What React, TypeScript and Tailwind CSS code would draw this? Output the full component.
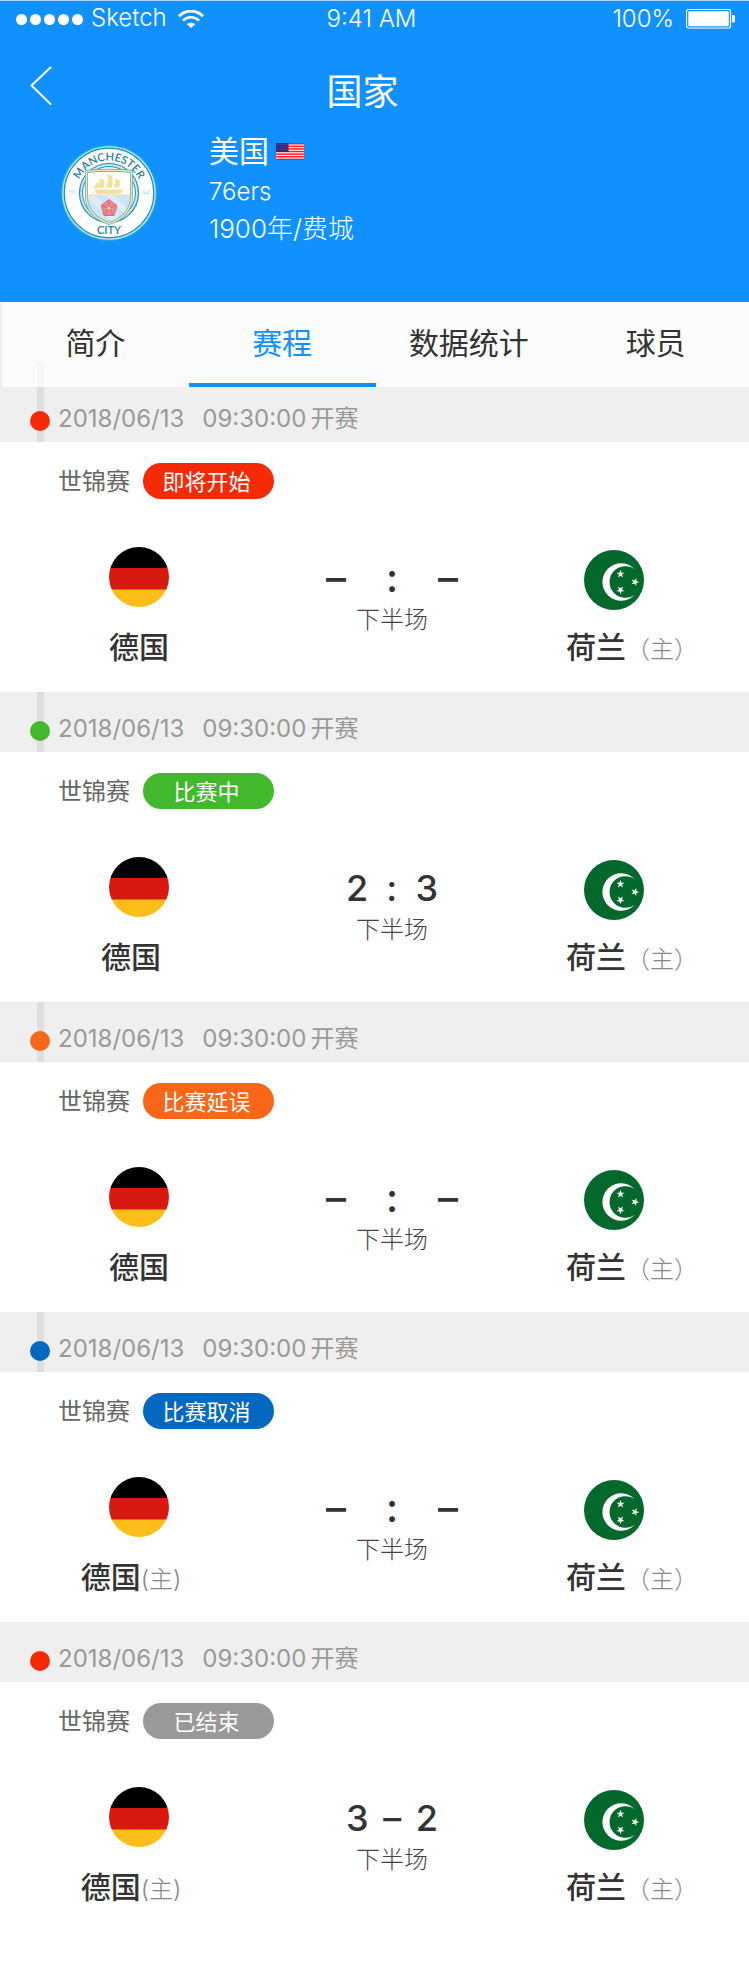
type Match = {
  id: number;
  status: string;
  pill: string;
  dot: string;
  score: [string, string, string];
  open: boolean;
  home: string;
  homeTag?: string;
  homePad: string;
};

const MATCHES: Match[] = [
  { id: 1, status: "即将开始", pill: "bg-[#f72a08]", dot: "bg-[#f72a08]", score: ["–", ":", "–"], open: true, home: "德国", homePad: "" },
  { id: 2, status: "比赛中", pill: "bg-[#42b92d]", dot: "bg-[#42b92d]", score: ["2", ":", "3"], open: false, home: "德国", homePad: "pr-4" },
  { id: 3, status: "比赛延误", pill: "bg-[#f86617]", dot: "bg-[#f86617]", score: ["–", ":", "–"], open: true, home: "德国", homePad: "" },
  { id: 4, status: "比赛取消", pill: "bg-[#0368bf]", dot: "bg-[#0368bf]", score: ["–", ":", "–"], open: true, home: "德国", homeTag: "(主)", homePad: "pr-4" },
  { id: 5, status: "已结束", pill: "bg-[#999999]", dot: "bg-[#f72a08]", score: ["3", "–", "2"], open: false, home: "德国", homeTag: "(主)", homePad: "pr-4" },
];

const TABS = ["简介", "赛程", "数据统计", "球员"];

function StatusBar() {
  return (
    <div className="grid h-9 grid-cols-3 items-center border-t border-[#a9d5fb] pr-[14px] pl-4 text-2xl leading-9 font-light">
      <div className="flex items-center">
        <div className="flex gap-[3px]">
          {[0, 1, 2, 3, 4].map((n) => (
            <span key={n} className="size-[11px] rounded-full bg-white" />
          ))}
        </div>
        <span className="ml-2 -mt-[2px]">Sketch</span>
        <svg className="ml-[11px] h-[18px] w-[26px]" viewBox="0 0 26 18" fill="none" aria-hidden="true">
          <path d="M1 6.2C7.8-.6 18.200-.6 25 6.200" stroke="#fff" strokeWidth="2.800" />
          <path d="M5 10.600C9.600 6.200 16.400 6.200 21 10.600" stroke="#fff" strokeWidth="2.600" />
          <path d="M13 18 8.800 14.200c2.400-2 6-2 8.400 0z" fill="#fff" />
        </svg>
      </div>
      <div className="pr-2 text-center">9:41 AM</div>
      <div className="flex items-center justify-end gap-3">
        <span>100%</span>
        <svg className="h-5 w-[49px]" viewBox="0 0 49 20" aria-hidden="true">
          <rect x=".5" y=".5" width="44" height="18.500" rx="2" fill="none" stroke="#fff" strokeWidth="1.200" />
          <rect x="2.300" y="2.300" width="40.500" height="15" rx="1" fill="#fff" />
          <path d="M46 6h1.500q1.500 0 1.500 1.500v4.500q0 1.500-1.500 1.500H46z" fill="#fff" />
        </svg>
      </div>
    </div>
  );
}

function Crest() {
  return (
    <svg className="size-24 shrink-0" viewBox="0 0 96 96" role="img" aria-label="Manchester City">
      <defs>
        <path id="crest-top" d="M15.500 48a32.500 32.500 0 0 1 65 0" />
        <clipPath id="crest-shield">
          <path d="M25.500 26.500Q48 24 70.500 26.500V51c0 14-9 23-22.500 27.500C34.500 74 25.500 65 25.500 51z" />
        </clipPath>
      </defs>
      <circle cx="48" cy="48" r="48" fill="#1cb0d0" />
      <circle cx="48" cy="48" r="46.800" fill="#c9e2ec" />
      <circle cx="48" cy="48" r="44.800" fill="#fff" stroke="#1595b8" strokeWidth="1.200" />
      <circle cx="48" cy="48" r="29.500" fill="#cfe3f1" stroke="#1595b8" strokeWidth="1.200" />
      <circle cx="48" cy="48" r="26.500" fill="#fff" stroke="#1595b8" strokeWidth="1" />
      <g clipPath="url(#crest-shield)">
        <rect x="24" y="24" width="48" height="26" fill="#fff" />
        <rect x="24" y="50" width="48" height="30" fill="#cfe4f5" />
        <path d="M24 50h10l28 28H52zM44 50h9l20 20v9z" fill="#dfedf8" />
        <path d="M24 50h48" stroke="#f0df9c" strokeWidth="1.200" />
      </g>
      <path d="M25.500 26.500Q48 24 70.500 26.500V51c0 14-9 23-22.500 27.500C34.500 74 25.500 65 25.500 51z" fill="none" stroke="#4aa5bd" strokeWidth="2.800" />
      <path d="M25.500 26.500Q48 24 70.500 26.500V51c0 14-9 23-22.500 27.500C34.500 74 25.500 65 25.500 51z" fill="none" stroke="#f3e4a4" strokeWidth="1.600" />
      <g fill="#f2e0a0">
        <path d="M33 44.500h27l3-1.500-3.500 6H36z" />
        <path d="M38 34l5 .5q1.500 4-.5 8H36q3-4 2-8.500zM46 29.500l5 1q1.500 5 0 12h-6q3-6 1-13zM54 34l4 .5q2 4 0 8h-5q2-4 1-8.500z" />
        <path d="M32 43l5-6v6zM40 32v13M48.500 28v16" stroke="#f2e0a0" strokeWidth=".6" />
      </g>
      <path d="M48 54.500l8 6-3 10H43l-3-10z" fill="#f0898b" stroke="#b06a80" strokeWidth=".8" />
      <path d="M48 63v-7M48 63l6.500-2M48 63l4 6.500M48 63l-4 6.500M48 63l-6.500-2" stroke="#c0607a" strokeWidth=".8" />
      <circle cx="48" cy="63" r="1.600" fill="#f7d6a0" />
      <g fill="#2c7fa4" className="font-['Lato',sans-serif] font-semibold">
        <text fontSize="11" textAnchor="middle">
          <textPath href="#crest-top" startOffset="50%">MANCHESTER</textPath>
        </text>
        <text x="48" y="89" fontSize="11" textAnchor="middle">CITY</text>
      </g>
      <g fill="#b9d9ee" fontSize="6" textAnchor="middle">
        <text x="11" y="50">18</text>
        <text x="85" y="50">94</text>
      </g>
    </svg>
  );
}

function UsFlag() {
  return (
    <svg className="h-[17px] w-7" viewBox="0 0 28 17" role="img" aria-label="USA">
      <rect width="28" height="17" fill="#fff" />
      {[0, 1, 2, 3, 4, 5, 6].map((n) => (
        <rect key={n} y={n * 2.6} width="28" height="1.500" fill="#fb1c25" />
      ))}
      <rect width="12.500" height="9" fill="#2f2a7a" />
      {[1.5, 4, 6.5].map((y) =>
        [1.5, 4, 6.5, 9, 11].map((x) => <circle key={`${x}-${y}`} cx={x} cy={y} r=".4" fill="#8f8cc0" />),
      )}
    </svg>
  );
}

function GermanyFlag() {
  return (
    <svg className="size-[60px]" viewBox="0 0 60 60" aria-hidden="true">
      <clipPath id="round-flag">
        <circle cx="30" cy="30" r="30" />
      </clipPath>
      <g clipPath="url(#round-flag)">
        <rect width="60" height="21" fill="#000" />
        <rect y="21" width="60" height="22" fill="#d7190f" />
        <rect y="42.500" width="60" height="18" fill="#febe1a" />
      </g>
    </svg>
  );
}

const STAR = "M0-4.200 1-1.300H4L1.600.5 2.500 3.400 0 1.700-2.500 3.400-1.600.5-4-1.300H-1z";

function CrescentFlag() {
  return (
    <svg className="size-[60px]" viewBox="0 0 60 60" aria-hidden="true">
      <circle cx="30" cy="30" r="30" fill="#02682b" />
      <path d="M51 19.500A18.700 18.700 0 1 0 51 44.500 15.800 15.800 0 1 1 51 19.500z" fill="#fff" />
      <g fill="#fff">
        <path d={STAR} transform="translate(36.500 24)" />
        <path d={STAR} transform="translate(51 32) rotate(20)" />
        <path d={STAR} transform="translate(36.500 40) rotate(36)" />
      </g>
    </svg>
  );
}

function MatchCard({ match, first, last }: { match: Match; first: boolean; last: boolean }) {
  return (
    <li>
      <div className={`relative flex items-end bg-[#efefef] pb-[5px] pl-[58px] ${first ? "h-[55px]" : "h-[60px]"}`}>
        {!last && <span className={`absolute bottom-0 left-[37px] w-[7px] bg-[#dedede] ${first ? "-top-[26px]" : "top-0"}`} />}
        <span className={`absolute bottom-[11px] left-[30px] size-5 rounded-full ${match.dot}`} />
        <time className="flex text-2xl leading-9 text-[#999999]">
          <span className="mr-[18px]">2018/06/13</span>
          <span className="mr-1">09:30:00</span>
          <span>开赛</span>
        </time>
      </div>
      <div className="bg-white pt-[21px] pb-[22px]">
        <div className="flex items-start gap-[13px] pl-[58px]">
          <span className="text-2xl leading-[38px] text-[#666666]">世锦赛</span>
          <span className={`h-9 w-[131px] rounded-full pr-1 text-center text-[22px] leading-[38px] text-white ${match.pill}`}>{match.status}</span>
        </div>
        <div className="mt-[46px] grid grid-cols-[278fr_228fr_216fr] pr-[27px] whitespace-nowrap text-[#333333]">
          <div className="flex flex-col items-center gap-[17px]">
            <GermanyFlag />
            <div className={`flex items-baseline text-[30px] leading-[46px] font-medium ${match.homePad}`}>
              {match.home}
              {match.homeTag && <span className="text-2xl font-light text-[#888888]">{match.homeTag}</span>}
            </div>
          </div>
          <div className="flex flex-col items-center gap-[2px] pt-[9px]">
            <div className={`flex justify-between leading-[44px] font-medium ${match.open ? "w-[132px] text-[40px]" : "w-[92px] text-4xl"}`}>
              {match.score.map((part, i) => (
                <span key={i}>{part}</span>
              ))}
            </div>
            <div className="text-2xl leading-9 font-light text-[#444444]">下半场</div>
          </div>
          <div className="flex flex-col items-center gap-[14px] pt-[3px]">
            <CrescentFlag />
            <div className="flex items-baseline pl-9 text-[30px] leading-[46px] font-medium">
              荷兰
              <span className="text-2xl font-light text-[#888888]">（主）</span>
            </div>
          </div>
        </div>
      </div>
    </li>
  );
}

export default function App() {
  return (
    <div className="min-h-screen bg-white font-['Inter','Noto_Sans_CJK_SC',sans-serif]" lang="zh-CN">
      <header className="bg-[#1191ff] pb-14 text-white">
        <StatusBar />
        <div className="grid grid-cols-[80px_1fr_80px] pt-[30px]">
          <button type="button" aria-label="返回" className="ml-[30px] self-start">
            <svg className="h-[39px] w-[22px]" viewBox="0 0 22 39" fill="none" stroke="#fff" strokeWidth="2" strokeLinecap="round" strokeLinejoin="round" aria-hidden="true">
              <path d="M20.500 1.500 1.500 19.500 20.500 38" />
            </svg>
          </button>
          <h1 className="pt-[2px] pr-6 text-center text-4xl leading-[48px]">国家</h1>
        </div>
        <div className="flex gap-[52px] pt-[14px] pl-[61px]">
          <div className="pt-[15px]">
            <Crest />
          </div>
          <div>
            <div className="flex items-center gap-[7px] text-[30px] leading-[42px]">
              美国
              <UsFlag />
            </div>
            <div className="text-2xl leading-10 font-light">76ers</div>
            <div className="text-[26px] leading-[34px] font-light">1900年/费城</div>
          </div>
        </div>
      </header>
      <nav className="relative z-10 grid h-[85px] grid-cols-4 border-l-2 border-[#efefef] bg-[#fcfcfc]/85">
        {TABS.map((tab) => (
          <button
            key={tab}
            type="button"
            className={`border-b-4 pt-px text-[30px] leading-[72px] ${tab === "赛程" ? "border-[#1191ff] text-[#1191ff]" : "border-transparent text-[#333333]"}`}
          >
            {tab}
          </button>
        ))}
      </nav>
      <ul>
        {MATCHES.map((match, i) => (
          <MatchCard key={match.id} match={match} first={i === 0} last={i === MATCHES.length - 1} />
        ))}
      </ul>
    </div>
  );
}
